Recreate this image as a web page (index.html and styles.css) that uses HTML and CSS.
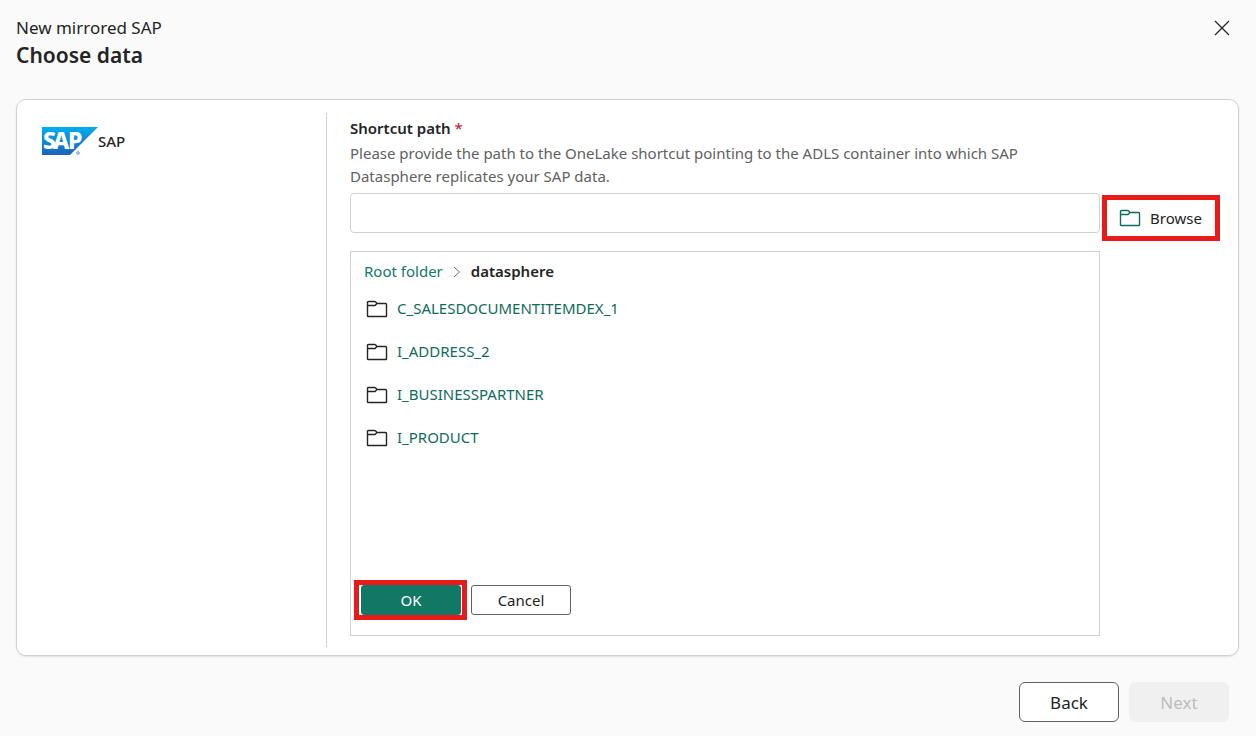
FILE: index.html
```html
<!DOCTYPE html>
<html lang="en">
<head>
    <meta charset="UTF-8">
    <meta name="viewport" content="width=device-width, initial-scale=1.0">
    <title>New mirrored SAP</title>
    <link rel="stylesheet" href="styles.css">
</head>
<body>

<svg class="defs" aria-hidden="true">
    <symbol id="folder" viewBox="0 0 22 18">
        <path d="M1.500 16V2.500q0-1 1-1h6q.7 0 1.200.5L11 3.500h8.500q1 0 1 1V16q0 .5-.5.5H2q-.5 0-.5-.5zM1.500 5.500h7.500L11 3.500" fill="none" stroke="currentColor" stroke-width="1.400"/>
    </symbol>
</svg>

<header class="header">
    <div>
        <p class="subtitle">New mirrored SAP</p>
        <h1>Choose data</h1>
    </div>
    <button class="close" type="button" aria-label="Close">
        <svg width="16" height="16" viewBox="0 0 16 16"><path d="M1 1l14 14M15 1L1 15" stroke="#242424" stroke-width="1.300"/></svg>
    </button>
</header>

<main class="card">
    <aside class="source">
        <svg class="logo" width="56" height="29" viewBox="0 0 56 29" aria-hidden="true">
            <defs>
                <linearGradient id="sap" x1="0" y1="0" x2="0" y2="1">
                    <stop offset="0" stop-color="#00b0ee"/>
                    <stop offset="1" stop-color="#1d61bc"/>
                </linearGradient>
            </defs>
            <path d="M0 0h56L28 28H0z" fill="url(#sap)"/>
            <text class="logo-text" x="1 11 26" y="22">SAP</text>
            <circle cx="36" cy="26" r="1.300" fill="none" stroke="#5a93d4" stroke-width="1"/>
        </svg>
        <span>SAP</span>
    </aside>

    <section class="content">
        <label class="label" for="path">Shortcut path <span class="required">*</span></label>
        <p class="hint" id="hint">Please provide the path to the OneLake shortcut pointing to the ADLS container into which SAP Datasphere replicates your SAP data.</p>

        <div class="grid">
            <input class="path" id="path" type="text" aria-describedby="hint">
            <button class="browse" type="button">
                <svg width="22" height="18"><use href="#folder"/></svg>
                Browse
            </button>

            <div class="picker">
                <nav class="crumbs">
                    <a href="#">Root folder</a>
                    <svg width="8" height="12" viewBox="0 0 8 12"><path d="M1 1l5.500 5L1 11" fill="none" stroke="#707070"/></svg>
                    <strong>datasphere</strong>
                </nav>
                <ul class="folders">
                    <li><svg width="22" height="18"><use href="#folder"/></svg><a href="#">C_SALESDOCUMENTITEMDEX_1</a></li>
                    <li><svg width="22" height="18"><use href="#folder"/></svg><a href="#">I_ADDRESS_2</a></li>
                    <li><svg width="22" height="18"><use href="#folder"/></svg><a href="#">I_BUSINESSPARTNER</a></li>
                    <li><svg width="22" height="18"><use href="#folder"/></svg><a href="#">I_PRODUCT</a></li>
                </ul>
                <div class="actions">
                    <div class="marked"><button class="btn primary" type="button">OK</button></div>
                    <button class="btn" type="button">Cancel</button>
                </div>
            </div>
        </div>
    </section>
</main>

<footer class="footer">
    <button class="btn large" type="button">Back</button>
    <button class="btn large" type="button" disabled>Next</button>
</footer>

</body>
</html>
```

FILE: styles.css
```css
* {box-sizing: border-box;}
body {display: flex; flex-direction: column; min-height: 100vh; margin: 0; padding: 16px 17px 14px 16px; background-color: #fafafa; color: #242424; font-family: "Segoe UI", "Noto Sans", sans-serif; font-size: 15px; line-height: 23px;}
h1, p, ul {margin: 0; padding: 0;}
button, input {font: inherit; color: inherit;}
button {cursor: pointer;}
a {color: #0f6b5c; text-decoration: none;}
.defs {position: absolute; width: 0; height: 0;}

.header {display: flex; justify-content: space-between; align-items: flex-start; height: 83px;}
.subtitle {font-size: 17px; line-height: 24px;}
h1 {font-size: 21px; line-height: 30px; font-weight: 600;}
.close {display: flex; margin-top: 4px; margin-right: 9px; padding: 0; border: none; background: none;}

.card {display: flex; flex: 1; padding: 13px 18px 8px 25px; background-color: #fff; border: 1px solid #d1d1d1; border-radius: 10px; box-shadow: 0 1px 2px rgba(0,0,0,0.1);}
.source {display: flex; flex: 0 0 285px; align-items: flex-start; padding-top: 14px; border-right: 1px solid #d1d1d1; font-weight: 500; line-height: 29px;}
.logo {overflow: visible;}
.logo-text {fill: #fff; font-size: 23px; font-weight: 800;}

.content {display: flex; flex: 1; flex-direction: column; padding: 4px 0 11px 23px;}
.label {font-weight: 600;}
.required {color: #c50f1f; font-weight: 400;}
.hint {max-width: 750px; margin: 2px 0 5px; color: #616161;}
.grid {display: grid; flex: 1; grid-template-columns: 1fr auto; grid-template-rows: auto 1fr; gap: 10px 2px;}
.path {width: 100%; height: 40px; padding: 0 12px; background-color: #fff; border: 1px solid #d1d1d1; border-radius: 4px;}
.browse {display: flex; align-items: center; gap: 9px; width: 118px; height: 46px; margin-top: 2px; padding: 0 12px; background-color: #fff; border: 5px solid #e81a1c;}
.browse svg {color: #0f6b5c;}

.picker {display: flex; flex-direction: column; padding: 8px 3px 15px; border: 1px solid #d1d1d1;}
.crumbs {display: flex; align-items: center; gap: 10px; padding-left: 10px;}
.crumbs a {color: #117865;}
.crumbs strong {font-weight: 600;}
.folders {display: grid; gap: 20px; padding: 14px 0 0 12px; list-style: none;}
.folders li {display: flex; align-items: center; gap: 9px;}
.actions {display: flex; align-items: center; gap: 4px; margin-top: auto;}
.marked {padding: 0 1px 0 2px; border: 5px solid #e81a1c;}

.btn {display: block; width: 100px; height: 30px; padding: 0; background-color: #fff; border: 1px solid #616161; border-radius: 3px;}
.primary {background-color: #117865; border-color: #117865; color: #fff;}
.footer {display: flex; justify-content: flex-end; gap: 10px; padding: 26px 10px 0 0;}
.large {height: 40px; border-radius: 6px; font-size: 17px;}
.btn:disabled {background-color: #f0f0f0; border-color: #f0f0f0; color: #bdbdbd; cursor: default;}
```
